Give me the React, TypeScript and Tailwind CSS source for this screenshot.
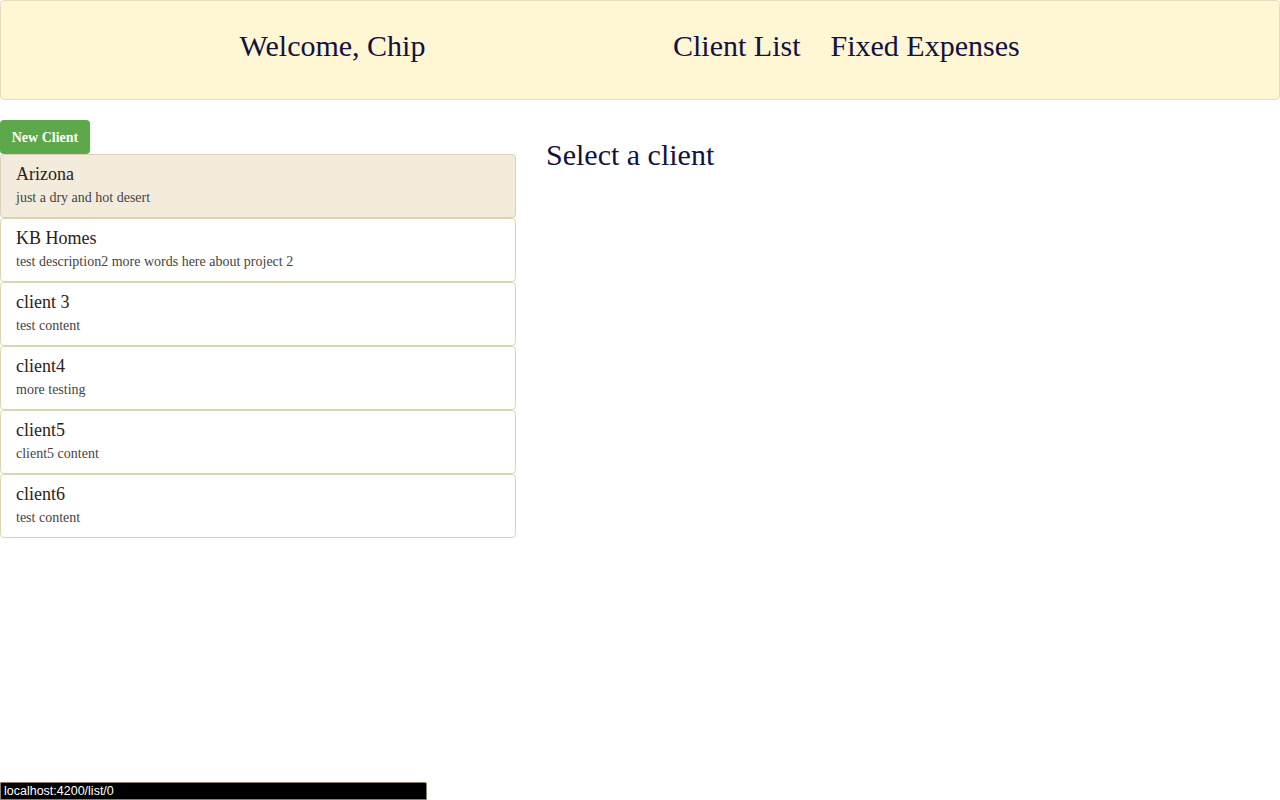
const clients = [
  { name: "Arizona", description: "just a dry and hot desert" },
  { name: "KB Homes", description: "test description2 more words here about project 2" },
  { name: "client 3", description: "test content" },
  { name: "client4", description: "more testing" },
  { name: "client5", description: "client5 content" },
  { name: "client6", description: "test content" },
];

export default function App() {
  const selected = 0;

  return (
    <div className="relative min-h-[800px] bg-white font-['Liberation_Serif','Times_New_Roman',serif] text-[#333]">
      {/* Header */}
      <div className="flex h-[100px] items-start rounded border border-[#e6dcbf] bg-[#fff6d4] pt-[28px] text-[30px] leading-[1.1] text-[#12123f]">
        <div className="w-[663px] text-center">Welcome, Chip</div>
        <nav className="flex gap-[30px] pl-[9px]">
          <a href="#">Client List</a>
          <a href="#">Fixed Expenses</a>
        </nav>
      </div>

      {/* Content */}
      <div className="flex">
        <div className="w-[516px] pt-[20px]">
          <button className="h-[34px] w-[90px] rounded bg-[#5ca84a] text-[14px] font-bold text-white">
            New Client
          </button>
          <div className="flex flex-col">
            {clients.map((c, i) => (
              <div
                key={c.name}
                className={
                  "h-[64px] rounded border border-[#ddd2b6] px-[15px] pt-[9px] " +
                  (i === selected ? "bg-[#f3ecdc]" : "bg-white")
                }
              >
                <div className="text-[18px] leading-[20px] text-[#2a2219]">{c.name}</div>
                <div className="mt-[4px] text-[14px] leading-[20px] text-[#444]">{c.description}</div>
              </div>
            ))}
          </div>
        </div>
        <div className="pl-[30px] pt-[38px]">
          <h2 className="text-[30px] leading-[1.1] text-[#12123f]">Select a client</h2>
        </div>
      </div>

      {/* Browser status link preview */}
      <div className="absolute bottom-0 left-0 h-[18px] w-[427px] rounded-tr-[2px] border border-[#8a8070] bg-black pl-[3px] font-['Liberation_Sans',Arial,sans-serif] text-[12.5px] leading-[16px] text-white">
        localhost:4200/list/0
      </div>
    </div>
  );
}
